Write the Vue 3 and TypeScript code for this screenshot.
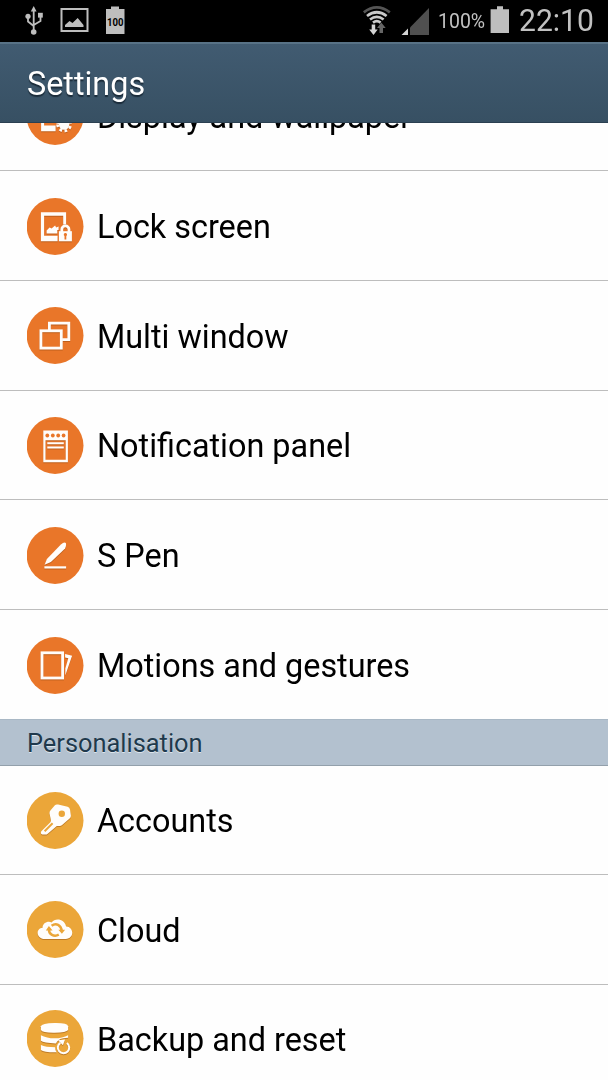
<script setup lang="ts">
type IconName = 'display' | 'lock' | 'windows' | 'panel' | 'pen' | 'motion' | 'key' | 'cloud' | 'backup'

interface Item {
  label: string
  icon: IconName
}

interface Section {
  title?: string
  tone: 'orange' | 'amber'
  items: Item[]
}

const sections: Section[] = [
  {
    tone: 'orange',
    items: [
      { label: 'Display and wallpaper', icon: 'display' },
      { label: 'Lock screen', icon: 'lock' },
      { label: 'Multi window', icon: 'windows' },
      { label: 'Notification panel', icon: 'panel' },
      { label: 'S Pen', icon: 'pen' },
      { label: 'Motions and gestures', icon: 'motion' },
    ],
  },
  {
    title: 'Personalisation',
    tone: 'amber',
    items: [
      { label: 'Accounts', icon: 'key' },
      { label: 'Cloud', icon: 'cloud' },
      { label: 'Backup and reset', icon: 'backup' },
    ],
  },
]
</script>

<template>
  <div class="screen">
    <div class="status">
      <svg class="glyphs-left" viewBox="0 0 140 42" width="140" height="42">
        <g fill="none" stroke="#bebebe" stroke-width="1.8">
          <path d="M33.7 10V31M28 17V21.5L33.7 26M40.5 16V21L33.7 25" />
          <rect x="61.5" y="9" width="26" height="22" stroke-width="2" />
        </g>
        <g fill="#bebebe">
          <path d="M33.7 6L36.6 11.5H30.8Z" />
          <circle cx="28" cy="16.3" r="2.6" />
          <rect x="38" y="12.8" width="4.8" height="4.8" />
          <circle cx="33.7" cy="32" r="2.8" />
          <path d="M65 27V25L69.5 21L72.5 23L77.7 18L83.5 25V27Z" />
          <path d="M106 9H111V6.5H119V9H124.500V34H106Z" />
        </g>
        <text class="tiny" x="115.2" y="26" text-anchor="middle" textLength="16.5" lengthAdjust="spacingAndGlyphs">100</text>
      </svg>
      <svg class="glyphs-right" viewBox="358 0 72 42" width="72" height="42">
        <g fill="none" stroke-width="2.7">
          <path d="M363.8 12.300Q376.800 2.500 389.800 12.300" stroke="#555" />
          <path d="M367 16Q376.800 8.500 386.600 16" stroke="#cacaca" />
          <path d="M370 19.500Q376.800 14.300 383.600 19.500" stroke="#cacaca" />
          <path d="M373 22.600Q376.800 19.800 380.600 22.600" stroke="#cacaca" />
        </g>
        <path d="M371.700 24.500H375.200V29.500H377.700L373.500 35L369.200 29.500H371.700Z" fill="#d4d4d4" />
        <path d="M379.500 33H383V28H385.700L381.300 22.500L377 28H379.500Z" fill="#666" />
        <path d="M429 8V35H410V27.500Z" fill="#505050" />
        <path d="M408 28.500V35H401.500Z" fill="#d4d4d4" />
      </svg>
      <span class="percent">100%</span>
      <svg class="battery" viewBox="0 0 20 28" width="20" height="28">
        <path d="M.6 3.200H7V.2H13V3.200H19V27H.6Z" fill="#bebebe" />
      </svg>
      <span class="clock">22:10</span>
    </div>

    <header class="bar"><h1>Settings</h1></header>

    <main class="list">
      <section v-for="(section, s) in sections" :key="s" :class="section.tone">
        <h2 v-if="section.title">{{ section.title }}</h2>
        <div v-for="item in section.items" :key="item.label" class="row">
          <svg class="icon" viewBox="0.4 0 57 57" width="57" height="57">
            <circle class="disc" cx="28.500" cy="28.500" r="28.400" />
            <g v-if="item.icon === 'display'" class="art">
              <path d="M14.500 14H39V29H36V17H17.500V37.500H29V43.300H14.500Z" />
              <circle cx="37.500" cy="36.500" r="5.200" />
              <path class="line" stroke-dasharray="2.600 2.600" d="M31 36.500a6.500 6.500 0 1 0 13 0a6.500 6.500 0 1 0 -13 0" />
            </g>
            <g v-else-if="item.icon === 'lock'" class="art">
              <path fill-rule="evenodd" d="M14.300 14.300H39.500V26.500H36.600V17.700H17.500V37.700H31V43.300H14.300Z" />
              <path d="M20 35.500V32.500L23 29.500L25 30.500L28.500 27.500L29.500 29.500L32 28.500V32H30.700V35.500Z" />
              <path class="line" d="M35.200 34V31.500a3.600 3.600 0 0 1 7.200 0V34" />
              <rect x="32.300" y="33.200" width="13" height="10.100" />
              <path class="cut" d="M38.800 35a1.700 1.700 0 0 1 .9 3.100V41.500H37.900V38.100a1.700 1.700 0 0 1 .9-3.100Z" />
            </g>
            <g v-else-if="item.icon === 'windows'" class="art">
              <path class="line" d="M22.800 23V16.200H42.200V32.700H35.500" />
              <rect class="line" x="14.300" y="23.800" width="20.400" height="17.300" />
            </g>
            <g v-else-if="item.icon === 'panel'" class="art">
              <path fill-rule="evenodd" d="M16.700 13.500H41.300V45.200H16.700ZM18.900 23.300V42.800H39.100V23.300Z" />
              <path class="line thin" d="M20.700 26.300H37.200M20.700 30.500H37.200" />
              <g class="cut">
                <circle cx="20.700" cy="18.500" r="1.900" /><circle cx="26.200" cy="18.500" r="1.900" />
                <circle cx="31.600" cy="18.500" r="1.900" /><circle cx="37" cy="18.500" r="1.900" />
              </g>
            </g>
            <g v-else-if="item.icon === 'pen'" class="art">
              <path d="M18 37.800L20.300 32L34.300 17.500Q37.700 14.500 39.200 16Q40 18.300 38.500 21.500L24.300 34.900Z" />
              <rect x="17.800" y="39.300" width="21.700" height="2.200" />
            </g>
            <g v-else-if="item.icon === 'motion'" class="art">
              <rect class="line" x="15.400" y="15.800" width="20.600" height="25.200" />
              <path d="M38.500 17L45.500 18.800L38.700 38.500V31.500L41.700 21.200L38.500 20.400Z" />
            </g>
            <g v-else-if="item.icon === 'key'" class="art">
              <path d="M28.300 13.300Q29.500 12 31.500 12.600L41 14.800Q43 15.400 43.400 17.500L44.300 23.500Q44.500 25.300 43 26.500L35.500 33Q34.500 34 33 34H30.200L20.800 42Q20 42.600 19 42.500H15.800Q14.200 42.300 14.300 40.700Q14.200 39.800 15 39L23.800 30.200Q24.800 29 24.200 27.500L22.900 21.500Q22.700 19.800 24 18.200Z" />
              <circle class="cut" cx="35.200" cy="21.800" r="3.200" />
              <path class="slot" d="M18 39.300L26 31.200" />
            </g>
            <g v-else-if="item.icon === 'cloud'" class="art">
              <path d="M18.500 38C8.500 37.500 9.500 27 16 26.700C15.800 22.500 21 19.500 25 21.500C28.500 16.500 38 17.700 39.500 25.500C47 25.500 48.500 37.500 39 38Z" />
              <g class="mark">
                <path d="M25 24.800C29.500 21.500 34.500 24 35.200 30M32.200 33.700C27.500 36.200 22 33.500 22.300 28" />
                <path class="tip" d="M31.700 28.700H38.500L35.300 32.800ZM19.200 29.500L22.300 25L26 29.500Z" />
              </g>
            </g>
            <g v-else class="art">
              <path d="M14.300 16.300Q15 13.200 28 13T41.500 16.300V20Q40 22.500 28 22.700T14.300 20Z" />
              <path d="M14.300 25.200Q20 28.300 28 28.300T41.500 25.200V27.700L36.500 28.300Q31.500 29 29.300 33.500Q17 33 14.300 30.800Z" />
              <path d="M14.300 35Q19 37.200 28.500 37.200Q28.400 40 30 42.300Q17.500 42.500 14.300 40Z" />
              <path class="line thin" d="M33.800 32.800a5.700 5.700 0 1 0 6.500 .2" />
              <path d="M31.500 30.200L38.500 29.500L36.300 35.200Z" />
            </g>
          </svg>
          <span class="label">{{ item.label }}</span>
        </div>
      </section>
    </main>
  </div>
</template>

<style>
body {
  margin: 0;
  overflow: hidden;
}
</style>

<style scoped>
.screen {
  width: 608px;
  height: 1080px;
  display: flex;
  flex-direction: column;
  overflow: hidden;
  background: #fefefe;
  font-family: Roboto, "Liberation Sans", sans-serif;
}
.status {
  flex: none;
  height: 42px;
  display: flex;
  background: #000;
  color: #c1c1c1;
}
.status svg { flex: none; }
.tiny {
  font: bold 11px Roboto, sans-serif;
  fill: #000;
}
.glyphs-right { margin-left: 218px; }
.percent {
  margin-left: 8px;
  width: 52px;
  font-size: 20.500px;
  line-height: 42px;
  transform: scaleX(.95);
  transform-origin: left;
}
.battery { margin-top: 6px; }
.clock {
  margin-left: 9px;
  font-size: 31.500px;
  line-height: 41px;
  white-space: nowrap;
  transform: scaleX(.955);
  transform-origin: left;
}
.bar {
  flex: none;
  height: 81px;
  box-sizing: border-box;
  padding-left: 27px;
  border-top: 2px solid #587286;
  border-bottom: 1px solid #2b4051;
  background: linear-gradient(#415b71, #375063);
}
h1 {
  margin: 0;
  font-size: 33px;
  font-weight: 400;
  line-height: 79px;
  color: #fff;
  text-shadow: 0 2px 1px #1b2c3a;
  transform: scaleX(.98);
  transform-origin: left;
}
.list {
  flex: 1;
  min-height: 0;
  overflow: hidden;
}
section:first-child { margin-top: -61.500px; }
.row {
  height: 109.700px;
  box-sizing: border-box;
  display: flex;
  align-items: center;
  padding-left: 27px;
  border-bottom: 1px solid #bdbdbd;
}
.orange .row:last-child {
  height: 109.200px;
  border-bottom: 0;
}
.amber .row { height: 109.400px; }
.icon {
  flex: none;
  margin-top: 1px;
}
.amber .icon { margin-top: 0; }
.orange { --disc: #e97629; }
.amber { --disc: #eba639; }
.disc, .cut { fill: var(--disc); }
.art {
  fill: #fffdfb;
  filter: drop-shadow(0 1px 0 rgba(125, 60, 10, .4));
}
.art .cut { fill: var(--disc); }
.line {
  fill: none;
  stroke: #fffdfb;
  stroke-width: 2.800;
}
.thin { stroke-width: 2; }
.slot {
  fill: none;
  stroke: var(--disc);
  stroke-width: 2;
}
.mark {
  fill: none;
  stroke: var(--disc);
  stroke-width: 2.500;
}
.tip {
  fill: var(--disc);
  stroke: none;
}
.label {
  margin-left: 12.500px;
  padding-top: 3px;
  font-size: 33px;
  line-height: 40px;
  color: #000;
  white-space: nowrap;
  transform: scaleX(.981);
  transform-origin: left;
}
.amber .label { padding-top: 2px; }
h2 {
  height: 46.800px;
  box-sizing: border-box;
  margin: 0;
  padding-left: 27px;
  border-top: 1px solid #a9b8c5;
  border-bottom: 1px solid #93a0ab;
  background: #b3c1cf;
  font-size: 25.400px;
  font-weight: 400;
  line-height: 46px;
  color: #20394c;
  text-shadow: 0 1px 0 #dde5ec;
}
</style>
